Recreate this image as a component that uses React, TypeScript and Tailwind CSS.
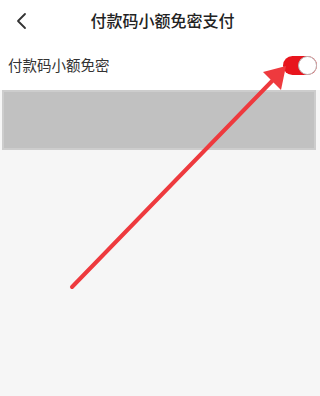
import React from 'react';

const App: React.FC = () => {
  return (
    <div
      className="relative w-[320px] h-[396px] bg-[#f6f6f6] overflow-hidden"
      style={{ fontFamily: '"Noto Sans CJK SC", "Noto Sans", sans-serif' }}
    >
      <div className="bg-white">
        <div className="relative h-[40px] flex items-center justify-center">
          <svg className="absolute left-[15px] top-[12px]" width="14" height="18" viewBox="0 0 14 18">
            <path d="M10 2 L3 9 L10 16" fill="none" stroke="#333" strokeWidth="1.8" strokeLinecap="round" strokeLinejoin="round" />
          </svg>
          <span className="text-[16px] font-medium text-[#222] ml-[5px]">付款码小额免密支付</span>
        </div>
        <div className="h-[50px] flex items-center justify-between pl-[8px] pr-[3px]">
          <span className="text-[14.5px] text-[#333]">付款码小额免密</span>
          <div className="w-[34px] h-[19px] rounded-full bg-[#e8151d] flex items-center justify-end">
            <div className="w-[19px] h-[19px] rounded-full bg-white border border-[#bbb]" />
          </div>
        </div>
      </div>
      <div className="ml-[2px] mr-[4px] h-[60px] bg-[#c1c1c1] border-2 border-[#cdcdcd]" />

      <svg className="absolute left-0 top-0 pointer-events-none" width="320" height="396" viewBox="0 0 320 396">
        <line x1="72" y1="287" x2="274" y2="79" stroke="#ee3a3e" strokeWidth="4" strokeLinecap="round" />
        <polygon points="286,66 281,90 263,72" fill="#ee3a3e" />
      </svg>
    </div>
  );
};

export default App;
